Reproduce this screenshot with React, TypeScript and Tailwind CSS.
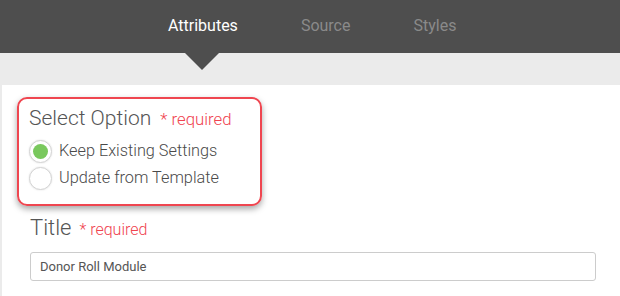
import React from 'react'

const Radio = ({ checked, label }: { checked?: boolean; label: string }) => (
  <div className="flex items-center h-[27px]">
    <span className="w-[23px] h-[23px] rounded-full border border-[#d4d4d4] bg-white flex items-center justify-center shadow-[0_0_2px_rgba(0,0,0,0.12)]">
      {checked && <span className="w-[15px] h-[15px] rounded-full bg-[#79c85d]" />}
    </span>
    <span className="ml-[7px] text-[16.3px] font-light text-[#4a4a4a]">{label}</span>
  </div>
)

export default function App() {
  return (
    <div className="w-[620px] h-[296px] bg-[#ebebeb] overflow-hidden flex flex-col font-['Roboto',sans-serif]">
      <div className="relative h-[53px] shrink-0 bg-[#4e4e4e] flex items-center pl-[168px] gap-[63px] text-[16px] pb-[2px]">
        <span className="text-white">Attributes</span>
        <span className="text-[#8a8a8a]">Source</span>
        <span className="text-[#8a8a8a]">Styles</span>
        <span className="absolute left-[185px] top-[53px] w-0 h-0 border-l-[17px] border-r-[17px] border-t-[17px] border-l-transparent border-r-transparent border-t-[#4e4e4e]" />
      </div>
      <div className="h-[32px] shrink-0" />
      <div className="ml-[2px] flex-1 bg-white pt-[12px]">
        <div className="ml-[15px] w-[245px] h-[109px] border-2 border-[#ef4650] rounded-[10px] shadow-[0_3px_6px_rgba(0,0,0,0.35)] pl-[10px] pt-[7px]">
          <div className="flex items-baseline leading-[25px]">
            <span className="text-[21px] font-light text-[#555]">Select Option</span>
            <span className="ml-[9px] text-[16.8px] font-light text-[#f0434f]">* required</span>
          </div>
          <div className="mt-[6px]">
            <Radio checked label="Keep Existing Settings" />
            <Radio label="Update from Template" />
          </div>
        </div>
        <div className="ml-[28px] mr-[24px] mt-[9px]">
          <div className="flex items-baseline leading-[26px]">
            <span className="text-[22px] font-light text-[#555]">Title</span>
            <span className="ml-[8px] text-[16px] font-light text-[#f0434f]">* required</span>
          </div>
          <div className="mt-[9px] h-[29px] border border-[#cccccc] rounded-[3px] flex items-center pl-[9px] text-[13px] text-[#555]">
            Donor Roll Module
          </div>
        </div>
      </div>
    </div>
  )
}
